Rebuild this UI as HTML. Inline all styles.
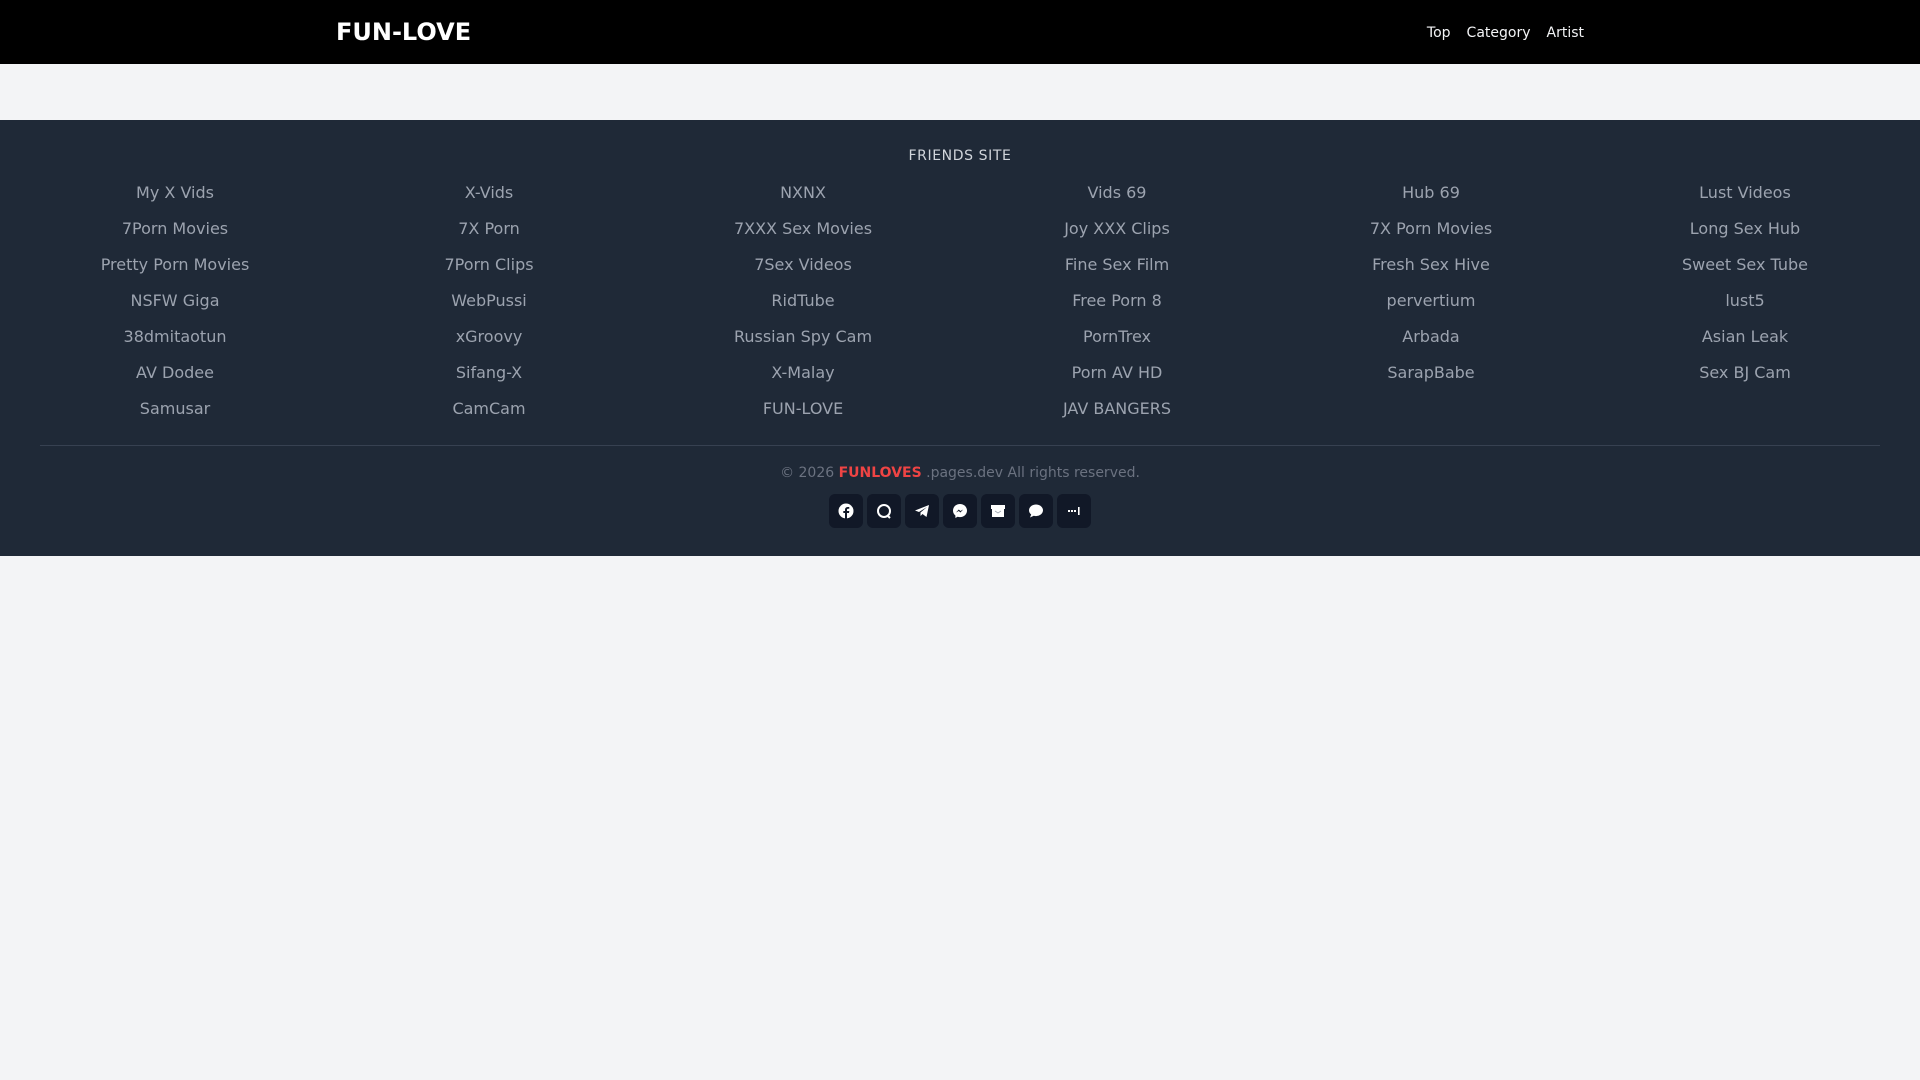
<!DOCTYPE html>
<html><head><meta charset="utf-8"><style>
*{margin:0;padding:0;box-sizing:border-box}
body{width:1920px;height:1080px;background:#f3f4f6;font-family:"DejaVu Sans","Liberation Sans",sans-serif;overflow:hidden}
header{height:64px;background:#000;position:relative}
.logo{position:absolute;left:336px;top:16px;font-size:24px;font-weight:bold;color:#fff;line-height:32px}
nav{position:absolute;right:336px;top:23px;font-size:14px;color:#f3f4f6;line-height:20px}
nav span{margin-left:16px}
.strip{height:56px}
footer{background:#1f2937;height:436px;position:relative}
.fs{position:absolute;top:26px;width:100%;text-align:center;font-size:14px;color:#d1d5db;line-height:20px;letter-spacing:.6px}
.grid{position:absolute;left:18px;top:61px;width:1884px;display:grid;grid-template-columns:repeat(6,314px);row-gap:12px}
.grid div{text-align:center;font-size:16px;color:#9ca3af;line-height:24px}
.sep{position:absolute;left:40px;right:40px;top:325px;border-top:1px solid #374151}
.copy{position:absolute;top:343px;width:100%;text-align:center;font-size:14px;color:#6b7280;line-height:20px}
.copy b{color:#ef4444}
.icons{position:absolute;left:829px;top:374px;display:flex;gap:4px}
.icons div{width:34px;height:34px;background:#111827;border-radius:6px;display:flex;align-items:center;justify-content:center}
</style></head><body>
<header><div class="logo">FUN-LOVE</div><nav><span>Top</span><span>Category</span><span>Artist</span></nav></header>
<div class="strip"></div>
<footer>
<div class="fs">FRIENDS SITE</div>
<div class="grid">
<div>My X Vids</div><div>X-Vids</div><div>NXNX</div><div>Vids 69</div><div>Hub 69</div><div>Lust Videos</div>
<div>7Porn Movies</div><div>7X Porn</div><div>7XXX Sex Movies</div><div>Joy XXX Clips</div><div>7X Porn Movies</div><div>Long Sex Hub</div>
<div>Pretty Porn Movies</div><div>7Porn Clips</div><div>7Sex Videos</div><div>Fine Sex Film</div><div>Fresh Sex Hive</div><div>Sweet Sex Tube</div>
<div>NSFW Giga</div><div>WebPussi</div><div>RidTube</div><div>Free Porn 8</div><div>pervertium</div><div>lust5</div>
<div>38dmitaotun</div><div>xGroovy</div><div>Russian Spy Cam</div><div>PornTrex</div><div>Arbada</div><div>Asian Leak</div>
<div>AV Dodee</div><div>Sifang-X</div><div>X-Malay</div><div>Porn AV HD</div><div>SarapBabe</div><div>Sex BJ Cam</div>
<div>Samusar</div><div>CamCam</div><div>FUN-LOVE</div><div>JAV BANGERS</div>
</div>
<div class="sep"></div>
<div class="copy">© 2026 <b>FUNLOVES</b> .pages.dev All rights reserved.</div>
<div class="icons">
<div><svg width="16" height="16" viewBox="0 0 16 16"><circle cx="8" cy="8" r="7.5" fill="#fff"/><path d="M9 16V10h2l.3-2H9V6.8c0-.6.3-1 1-1h1.3V4.1C11 4 10.4 4 9.8 4 8.3 4 7 4.9 7 6.6V8H5.3v2H7v6z" fill="#111827"/></svg></div>
<div><svg width="16" height="16" viewBox="0 0 16 16"><circle cx="8" cy="8" r="6" fill="none" stroke="#fff" stroke-width="2"/><path d="M11 12l3 3" stroke="#fff" stroke-width="2"/></svg></div>
<div><svg width="16" height="16" viewBox="0 0 16 16"><path d="M1 7.5L15 2l-2.5 12-4-3-2 2v-3.5L13 4 5 9z" fill="#fff"/></svg></div>
<div><svg width="16" height="16" viewBox="0 0 16 16"><path d="M8 1C4 1 1 3.9 1 7.6c0 2 .9 3.7 2.4 4.9V15l2.2-1.2c.8.2 1.5.3 2.4.3 4 0 7-2.9 7-6.5S12 1 8 1z" fill="#fff"/><path d="M4 9.5l2.8-3 1.6 1.5 2.8-1.5-2.8 3-1.6-1.5z" fill="#111827"/></svg></div>
<div><svg width="16" height="16" viewBox="0 0 16 16"><rect x="1" y="2" width="14" height="4" fill="#fff"/><rect x="2" y="6" width="12" height="8" fill="#fff"/><path d="M5 8l3 2 3-2" stroke="#9ca3af" fill="none" stroke-width=".8"/></svg></div>
<div><svg width="16" height="16" viewBox="0 0 16 16"><path d="M8 1.5c3.9 0 7 2.6 7 5.8s-3.1 5.8-7 5.8c-.8 0-1.5-.1-2.2-.3L2 14.5l1.2-3C1.8 10.4 1 9 1 7.3 1 4.1 4.1 1.5 8 1.5z" fill="#fff"/></svg></div>
<div><svg width="16" height="16" viewBox="0 0 16 16"><rect x="2" y="7" width="2" height="2" fill="#fff"/><rect x="5" y="7" width="2" height="2" fill="#fff"/><rect x="8" y="7" width="2" height="2" fill="#fff"/><rect x="12" y="4" width="1.6" height="8" fill="#fff"/></svg></div>
</div>
</footer>
</body></html>
